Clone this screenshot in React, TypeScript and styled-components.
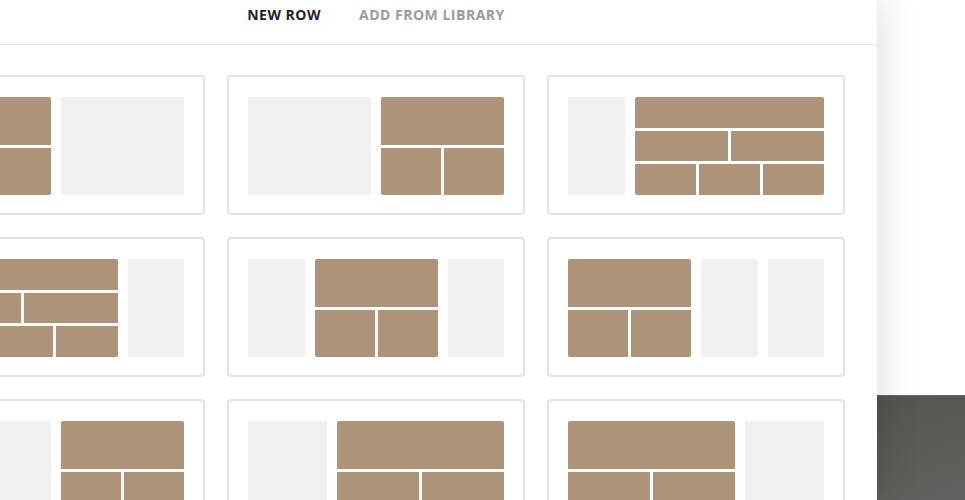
import React from "react";
import styled, { createGlobalStyle } from "styled-components";

const GlobalStyle = createGlobalStyle`
  html, body {
    margin: 0;
    padding: 0;
    height: 100%;
    overflow: hidden;
  }
  body {
    font-family: "Open Sans", "Liberation Sans", sans-serif;
    background: #ffffff;
  }
  #root {
    height: 100%;
  }
`;

const Page = styled.div`
  display: flex;
  height: 500px;
  width: 965px;
  overflow: hidden;
`;

const Panel = styled.div`
  position: relative;
  z-index: 1;
  flex: 0 0 1002px;
  margin-left: -125px;
  height: 100%;
  background: #ffffff;
  box-shadow: 0 0 40px rgba(0, 0, 0, 0.16);
  overflow: hidden;
`;

const Header = styled.div`
  display: flex;
  justify-content: center;
  gap: 38px;
  height: 45px;
  padding-top: 5px;
  box-sizing: border-box;
  border-bottom: 1px solid #e6e6e6;
`;

const Tab = styled.div<{ $active?: boolean }>`
  font-size: 14px;
  font-weight: 700;
  letter-spacing: 0.5px;
  line-height: 19px;
  color: ${(p) => (p.$active ? "#1f2130" : "#9a9a9a")};
  cursor: pointer;
`;

const CardGrid = styled.div`
  display: grid;
  grid-template-columns: repeat(3, 298px);
  gap: 22px;
  padding: 30px 32px;
`;

const Card = styled.div`
  box-sizing: border-box;
  width: 298px;
  height: 140px;
  border: 2px solid #e4e4e4;
  border-radius: 4px;
  padding: 20px 19px 18px;
  background: #fff;
`;

const Columns = styled.div`
  display: grid;
  grid-template-columns: repeat(12, 1fr);
  column-gap: 10px;
  height: 98px;
`;

const EmptyCol = styled.div<{ $span: number }>`
  grid-column: span ${(p) => p.$span};
  background: #f0f0f0;
  border-radius: 2px;
`;

const FilledCol = styled.div<{ $span: number }>`
  grid-column: span ${(p) => p.$span};
  display: flex;
  flex-direction: column;
  gap: 3px;
  border-radius: 2px;
  overflow: hidden;
`;

const CellRow = styled.div`
  flex: 1;
  display: flex;
  gap: 3px;
`;

const Cell = styled.div`
  flex: 1;
  background: #ad9479;
`;

const Backdrop = styled.div`
  flex: 1;
  display: flex;
  flex-direction: column;
`;

const LightArea = styled.div`
  height: 395px;
  background: #ffffff;
`;

const DarkArea = styled.div`
  flex: 1;
  background: linear-gradient(160deg, #54554f 0%, #5d5d58 60%, #62625f 100%);
  border-top: 1px solid #66665f;
`;

type Column =
  | { kind: "empty"; span: number }
  | { kind: "filled"; span: number; rows: number[] };

const half: number[] = [1, 2];
const thirds: number[] = [1, 2, 3];

const layouts: Column[][] = [
  [
    { kind: "filled", span: 6, rows: half },
    { kind: "empty", span: 6 },
  ],
  [
    { kind: "empty", span: 6 },
    { kind: "filled", span: 6, rows: half },
  ],
  [
    { kind: "empty", span: 3 },
    { kind: "filled", span: 9, rows: thirds },
  ],
  [
    { kind: "filled", span: 9, rows: thirds },
    { kind: "empty", span: 3 },
  ],
  [
    { kind: "empty", span: 3 },
    { kind: "filled", span: 6, rows: half },
    { kind: "empty", span: 3 },
  ],
  [
    { kind: "filled", span: 6, rows: half },
    { kind: "empty", span: 3 },
    { kind: "empty", span: 3 },
  ],
  [
    { kind: "empty", span: 6 },
    { kind: "filled", span: 6, rows: half },
  ],
  [
    { kind: "empty", span: 4 },
    { kind: "filled", span: 8, rows: half },
  ],
  [
    { kind: "filled", span: 8, rows: half },
    { kind: "empty", span: 4 },
  ],
];

const LayoutCard: React.FC<{ columns: Column[] }> = ({ columns }) => (
  <Card>
    <Columns>
      {columns.map((col, i) =>
        col.kind === "empty" ? (
          <EmptyCol key={i} $span={col.span} />
        ) : (
          <FilledCol key={i} $span={col.span}>
            {col.rows.map((count, r) => (
              <CellRow key={r}>
                {Array.from({ length: count }).map((_, c) => (
                  <Cell key={c} />
                ))}
              </CellRow>
            ))}
          </FilledCol>
        )
      )}
    </Columns>
  </Card>
);

const App: React.FC = () => {
  return (
    <>
      <GlobalStyle />
      <Page>
        <Panel>
          <Header>
            <Tab $active>NEW ROW</Tab>
            <Tab>ADD FROM LIBRARY</Tab>
          </Header>
          <CardGrid>
            {layouts.map((cols, i) => (
              <LayoutCard key={i} columns={cols} />
            ))}
          </CardGrid>
        </Panel>
        <Backdrop>
          <LightArea />
          <DarkArea />
        </Backdrop>
      </Page>
    </>
  );
};

export default App;
